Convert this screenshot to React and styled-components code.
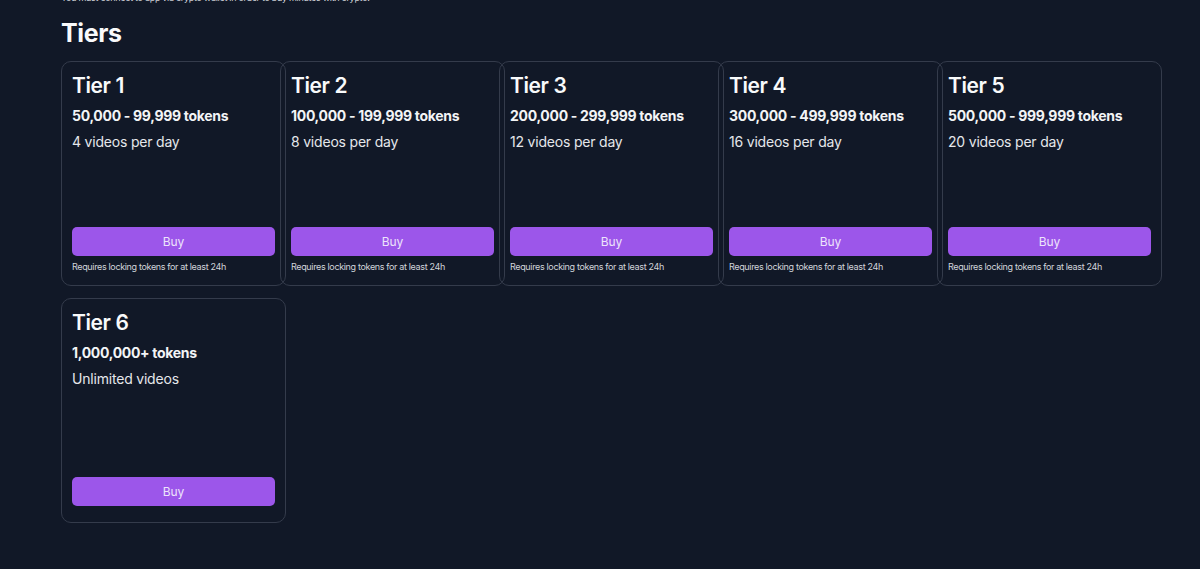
import React from "react";
import styled, { createGlobalStyle } from "styled-components";

const tiers = [
  { name: "Tier 1", tokens: "50,000 - 99,999 tokens", videos: "4 videos per day", lock: true },
  { name: "Tier 2", tokens: "100,000 - 199,999 tokens", videos: "8 videos per day", lock: true },
  { name: "Tier 3", tokens: "200,000 - 299,999 tokens", videos: "12 videos per day", lock: true },
  { name: "Tier 4", tokens: "300,000 - 499,999 tokens", videos: "16 videos per day", lock: true },
  { name: "Tier 5", tokens: "500,000 - 999,999 tokens", videos: "20 videos per day", lock: true },
  { name: "Tier 6", tokens: "1,000,000+ tokens", videos: "Unlimited videos", lock: false },
];

const TierCard = ({ tier }) => (
  <Card>
    <TierName>{tier.name}</TierName>
    <Tokens>{tier.tokens}</Tokens>
    <Videos>{tier.videos}</Videos>
    <BuyButton>Buy</BuyButton>
    {tier.lock && <Note>Requires locking tokens for at least 24h</Note>}
  </Card>
);

export default function App() {
  return (
    <Page>
      <GlobalStyle />
      <Notice>You must connect to app via crypto wallet in order to buy minutes with crypto.</Notice>
      <Heading>Tiers</Heading>
      <Grid>
        {tiers.map((t) => (
          <TierCard key={t.name} tier={t} />
        ))}
      </Grid>
    </Page>
  );
}

const GlobalStyle = createGlobalStyle`
  html, body {
    margin: 0;
    background: #111827;
    color: #f3f4f6;
    font-family: Inter, "Noto Sans", sans-serif;
    font-optical-sizing: none;
    font-variation-settings: "opsz" 32;
  }
`;

const Page = styled.div`
  min-height: 569px;
  padding: 0 0 0 61px;
  overflow: hidden;
`;

const Notice = styled.p`
  margin: -9px 0 0;
  font-size: 9px;
  line-height: 14px;
  letter-spacing: -0.3px;
  color: #d1d5db;
`;

const Heading = styled.h2`
  margin: 11px 0 0;
  font-size: 25px;
  line-height: 34px;
  font-weight: 700;
  letter-spacing: -0.4px;
  color: #f9fafb;
`;

const Grid = styled.div`
  display: grid;
  grid-template-columns: repeat(5, 207px);
  column-gap: 12px;
  row-gap: 12px;
  margin-top: 11px;
`;

const Card = styled.div`
  box-sizing: border-box;
  width: 225px;
  height: 225px;
  padding: 11px 10px 16px 10px;
  border: 1px solid #343b4b;
  border-radius: 10px;
  display: flex;
  flex-direction: column;
`;

const TierName = styled.h3`
  margin: 0;
  font-size: 21px;
  line-height: 26px;
  font-weight: 600;
  letter-spacing: -0.4px;
  color: #f9fafb;
`;

const Tokens = styled.div`
  margin-top: 7px;
  font-size: 14px;
  line-height: 20px;
  font-weight: 700;
  letter-spacing: -0.3px;
  color: #f3f4f6;
`;

const Videos = styled.div`
  margin-top: 5px;
  font-size: 14px;
  line-height: 22px;
  font-weight: 400;
  letter-spacing: -0.2px;
  color: #e5e7eb;
`;

const BuyButton = styled.button`
  margin-top: auto;
  height: 29px;
  border: none;
  border-radius: 5px;
  background: #9c56ea;
  color: #ede4fb;
  font-family: inherit;
  font-size: 12px;
  cursor: pointer;
`;

const Note = styled.div`
  margin: 4px 0 -4px;
  font-size: 9px;
  line-height: 13px;
  letter-spacing: -0.35px;
  color: #d1d5db;
`;
